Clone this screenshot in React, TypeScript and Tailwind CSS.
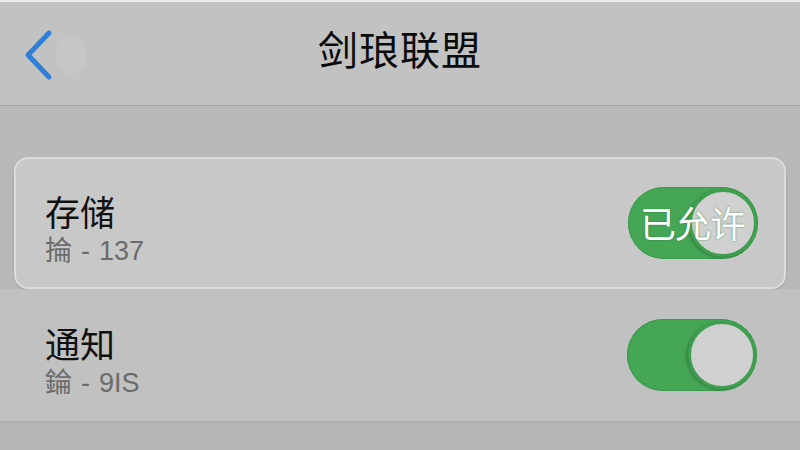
import React from "react";

const font = { fontFamily: '"Noto Sans CJK SC", "Noto Sans", sans-serif' };

// iOS-style switch, optional label inside the track
const Toggle = ({ label }: { label?: string }) => (
  <div className="relative w-[130px] h-[72px] rounded-full bg-[#45a656] shadow-[inset_0_0_0_1px_#3b9a4c]">
    <div className="absolute right-[1px] top-[2px] w-[68px] h-[68px] rounded-full bg-[#d0d0d0] border-[3px] border-[#3f9f50] shadow-[-2px_1px_3px_rgba(0,0,0,0.2)]" />
    {label && (
      <span className="absolute left-[12px] top-[10px] text-[36px] leading-[50px] text-white tracking-[-1px] [text-shadow:0_0_2px_#2f8a40]">
        {label}
      </span>
    )}
  </div>
);

const Row = ({ title, sub, num, label, pad }: { title: string; sub: string; num: string; label?: string; pad: string }) => (
  <div className={`flex items-center justify-between h-full ${pad}`}>
    <div className="flex flex-col pt-[8px]">
      <span className="text-[35px] leading-[46px] text-[#111]">{title}</span>
      <div className="flex items-baseline gap-[9px] text-[27px] leading-[30px] text-[#6b6b6b]">
        <span>{sub}</span>
        <span style={{ fontFamily: '"Liberation Sans", sans-serif' }}>-</span>
        <span style={{ fontFamily: '"Liberation Sans", sans-serif' }}>{num}</span>
      </div>
    </div>
    <Toggle label={label} />
  </div>
);

export default function App() {
  return (
    <div className="w-[800px] h-[450px] overflow-hidden bg-[#b8b8b8] flex flex-col" style={font}>
      <div className="h-[2px] bg-[#ececec]" />
      <div className="relative h-[104px] bg-[#c2c2c2] border-b border-[#a8a8a8] flex items-center justify-center shrink-0">
        <div className="absolute left-[20px] top-[26px] flex items-center">
          <svg width="36" height="54" viewBox="0 0 36 54">
            <path d="M29 5 L8 27 L29 49" fill="none" stroke="#2f7fd6" strokeWidth="5" strokeLinecap="round" strokeLinejoin="round" />
          </svg>
          <div className="w-[30px] h-[38px] rounded-full bg-[#c6c6c6]" />
        </div>
        <span className="text-[40px] leading-none text-[#0a0a0a] tracking-[1px] -mt-[12px]">剑琅联盟</span>
      </div>
      <div className="h-[51px] bg-[#b9b9b9] shrink-0" />
      <div className="mx-[14px] h-[132px] rounded-[14px] bg-[#c8c8c8] border-2 border-[#dcdcdc] shadow-[0_1px_2px_rgba(0,0,0,0.15)] shrink-0">
        <Row title="存储" sub="掄" num="137" label="已允许" pad="pl-[29px] pr-[26px]" />
      </div>
      <div className="h-[133px] bg-[#c1c1c1] border-b border-[#a9a9a9] shrink-0">
        <Row title="通知" sub="錀" num="9IS" pad="pl-[45px] pr-[43px]" />
      </div>
      <div className="flex-1 bg-[#b5b5b5]" />
    </div>
  );
}
